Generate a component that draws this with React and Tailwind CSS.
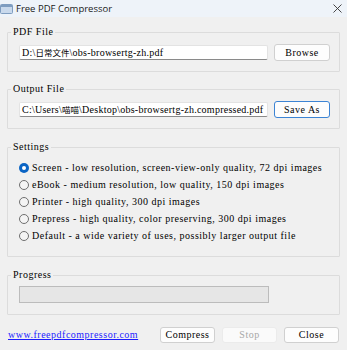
import React from "react";

const F = "[font-family:'Liberation_Serif','Noto_Sans_CJK_SC',serif] text-[10px] tracking-[0.5px] text-black";
const CJK = "[font-family:'Noto_Sans_CJK_SC',sans-serif] text-[8.5px] tracking-[0px]";

function Btn({ children, className = "", disabled = false, focused = false }) {
  return (
    <div
      className={
        "flex items-center justify-center rounded-[3px] border " +
        (disabled
          ? "bg-[#fafafa] border-[#ebebeb] text-[#a8a8a8] "
          : focused
          ? "bg-[#fdfdfd] border-[#3c84d4] text-black "
          : "bg-[#fdfdfd] border-[#d0d0d0] text-black ") +
        className
      }
    >
      <span className="leading-none">{children}</span>
    </div>
  );
}

function Group({ label, className = "", children }) {
  return (
    <fieldset className={"border border-[#dcdcdc] rounded-[1px] " + className}>
      <legend className="ml-[3px] px-[2px] leading-[12px]">{label}</legend>
      {children}
    </fieldset>
  );
}

function Input({ children }) {
  return (
    <div className="w-[249px] h-[15px] bg-white border border-[#e3e3e3] border-b-[#8a8a8a] rounded-[2px] flex items-center pl-[2px] overflow-hidden whitespace-nowrap tracking-[0.25px]">
      <span className="leading-none">{children}</span>
    </div>
  );
}

function Radio({ checked, children }) {
  return (
    <div className="h-[17px] flex items-center gap-[3px]">
      {checked ? (
        <div className="w-[10px] h-[10px] rounded-full bg-[#0a64c4] flex items-center justify-center">
          <div className="w-[4px] h-[4px] rounded-full bg-white" />
        </div>
      ) : (
        <div className="w-[10px] h-[10px] rounded-full border border-[#6f6f6f] bg-[#f4f4f4]" />
      )}
      <span className="leading-none whitespace-nowrap">{children}</span>
    </div>
  );
}

export default function App() {
  return (
    <div className={"w-[347px] h-[350px] bg-[#f0f0f0] overflow-hidden " + F}>
      <div className="h-[17px] bg-[#eef3f9] flex items-center">
        <svg width="13" height="10" viewBox="0 0 13 10">
          <rect x="0.5" y="0.5" width="12" height="9" rx="1" fill="#c9d9ec" stroke="#7f9dc0" />
          <rect x="1" y="1" width="11" height="2" fill="#7f9dc0" />
        </svg>
        <span className="ml-[3px] [font-family:'Open_Sans',sans-serif] text-[9.5px] tracking-normal leading-none text-[#1a1a1a]">
          Free PDF Compressor
        </span>
        <svg width="9" height="9" viewBox="0 0 9 9" className="ml-auto mr-[5px]">
          <path d="M0.5 0.5 L8.5 8.5 M8.5 0.5 L0.5 8.5" stroke="#333" strokeWidth="0.9" />
        </svg>
      </div>

      <div className="px-[7px]">
        <Group label="PDF File" className="mt-[9px]">
          <div className="flex items-center gap-[6px] pl-[11px] pr-[9px] pt-[6px] pb-[10px]">
            <Input>
              D:\<span className={CJK}>日常文件</span>\obs-browsertg-zh.pdf
            </Input>
            <Btn className="w-[56px] h-[17px]">Browse</Btn>
          </div>
        </Group>

        <Group label="Output File" className="mt-[11px]">
          <div className="flex items-center gap-[6px] pl-[11px] pr-[9px] pt-[6px] pb-[10px]">
            <Input>
              C:\Users\<span className={CJK}>喵喵</span>\Desktop\obs-browsertg-zh.compressed.pdf
            </Input>
            <Btn focused className="w-[56px] h-[17px]">Save As</Btn>
          </div>
        </Group>

        <Group label="Settings" className="mt-[12px]">
          <div className="flex flex-col pl-[11px] pt-[6px] pb-[12px]">
            <Radio checked>Screen - low resolution, screen-view-only quality, 72 dpi images</Radio>
            <Radio>eBook - medium resolution, low quality, 150 dpi images</Radio>
            <Radio>Printer - high quality, 300 dpi images</Radio>
            <Radio>Prepress - high quality, color preserving, 300 dpi images</Radio>
            <Radio>Default - a wide variety of uses, possibly larger output file</Radio>
          </div>
        </Group>

        <Group label="Progress" className="mt-[12px]">
          <div className="pl-[11px] pt-[5px] pb-[11px]">
            <div className="w-[250px] h-[17px] bg-[#e6e6e6] border border-[#bcbcbc]" />
          </div>
        </Group>

        <div className="mt-[12px] flex items-center">
          <span className="ml-[1px] text-[#1d1dff] underline leading-none">www.freepdfcompressor.com</span>
          <div className="ml-auto mr-[1px] flex gap-[7px]">
            <Btn className="w-[55px] h-[16px]">Compress</Btn>
            <Btn disabled className="w-[55px] h-[16px]">Stop</Btn>
            <Btn className="w-[55px] h-[16px]">Close</Btn>
          </div>
        </div>
      </div>
    </div>
  );
}
